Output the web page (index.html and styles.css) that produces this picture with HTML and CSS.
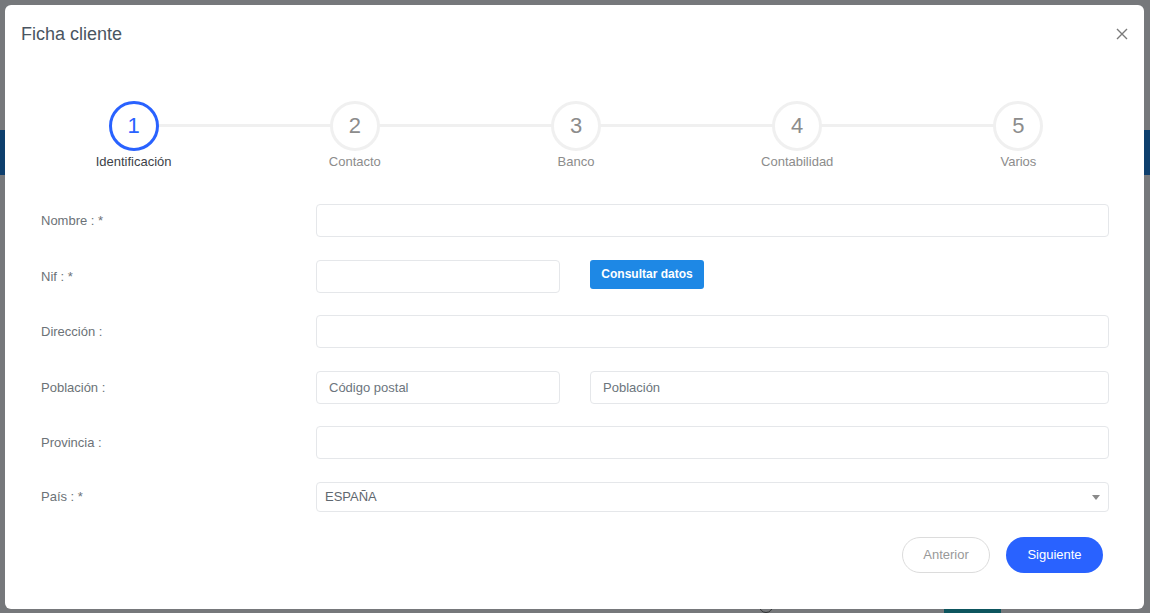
FILE: index.html
```html
<!DOCTYPE html>
<html lang="es">
<head>
    <meta charset="UTF-8">
    <meta name="viewport" content="width=device-width, initial-scale=1.0">
    <title>Ficha cliente</title>
    <link rel="stylesheet" href="styles.css">
</head>
<body>
    <div class="page">
        <div class="page-bar"></div>
        <div class="page-foot">
            <span class="foot-icon"></span>
            <span class="foot-text">g</span>
            <span class="foot-btn"></span>
        </div>
    </div>

    <div class="overlay">
        <div class="modal">
            <div class="modal-header">
                <h3 class="modal-title">Ficha cliente</h3>
                <button class="close" type="button" aria-label="Cerrar">
                    <svg width="12" height="12" viewBox="0 0 12 12">
                        <path d="M1 1 L11 11 M11 1 L1 11" stroke="#7a7a7a" stroke-width="1.4" fill="none"/>
                    </svg>
                </button>
            </div>

            <div class="modal-body">
                <div class="steps">
                    <div class="step active">
                        <div class="step-circle">1</div>
                        <div class="step-label">Identificación</div>
                    </div>
                    <div class="step">
                        <div class="step-circle">2</div>
                        <div class="step-label">Contacto</div>
                    </div>
                    <div class="step">
                        <div class="step-circle">3</div>
                        <div class="step-label">Banco</div>
                    </div>
                    <div class="step">
                        <div class="step-circle">4</div>
                        <div class="step-label">Contabilidad</div>
                    </div>
                    <div class="step">
                        <div class="step-circle">5</div>
                        <div class="step-label">Varios</div>
                    </div>
                </div>

                <form class="form">
                    <div class="row">
                        <label>Nombre : *</label>
                        <input type="text">
                    </div>
                    <div class="row">
                        <label>Nif : *</label>
                        <div class="split">
                            <input type="text">
                            <button class="btn-query" type="button">Consultar datos</button>
                        </div>
                    </div>
                    <div class="row">
                        <label>Dirección :</label>
                        <input type="text">
                    </div>
                    <div class="row">
                        <label>Población :</label>
                        <div class="split">
                            <input type="text" placeholder="Código postal">
                            <input type="text" placeholder="Población">
                        </div>
                    </div>
                    <div class="row">
                        <label>Provincia :</label>
                        <input type="text">
                    </div>
                    <div class="row">
                        <label>País : *</label>
                        <div class="select">
                            <span>ESPAÑA</span>
                            <span class="caret"></span>
                        </div>
                    </div>

                    <div class="actions">
                        <button class="btn btn-prev" type="button">Anterior</button>
                        <button class="btn btn-next" type="button">Siguiente</button>
                    </div>
                </form>
            </div>
        </div>
    </div>
</body>
</html>
```

FILE: styles.css
```css
* {
    box-sizing: border-box;
}

body {
    margin: 0;
    font-family: "Liberation Sans", Arial, sans-serif;
    background: #76787b;
    height: 613px;
    overflow: hidden;
}

/* page behind the overlay (already dimmed) */
.page {
    padding-top: 130px;
}

.page-bar {
    height: 45px;
    background: #0e3f6d;
}

.page-foot {
    display: flex;
    align-items: flex-start;
    margin-top: 423px;
    height: 20px;
}

.foot-icon {
    width: 14px;
    height: 14px;
    margin-left: 759px;
    margin-top: 1px;
    border: 1px solid #2f3133;
    border-radius: 50%;
}

.foot-text {
    margin-left: 38px;
    margin-top: -8px;
    font-size: 13px;
    color: #2f3133;
}

.foot-btn {
    width: 57px;
    height: 20px;
    margin-left: 126px;
    background: #0d555e;
    border-radius: 3px;
}

/* modal */
.overlay {
    position: fixed;
    inset: 0;
}

.modal {
    position: absolute;
    top: 5px;
    left: 5px;
    width: 1139px;
    height: 604px;
    background: #fff;
    border-radius: 6px;
}

.modal-header {
    display: flex;
    justify-content: space-between;
    align-items: center;
    padding: 18px 15px 0 16px;
}

.modal-title {
    margin: 0;
    font-size: 18px;
    line-height: 22px;
    font-weight: normal;
    color: #4a5561;
}

.close {
    border: 0;
    background: none;
    padding: 0;
    width: 14px;
    height: 14px;
    display: flex;
    align-items: center;
    justify-content: center;
    cursor: pointer;
}

.modal-body {
    padding: 0 16px;
}

/* stepper */
.steps {
    display: flex;
    margin: 56px -1px 0 2px;
}

.step {
    flex: 1;
    display: flex;
    flex-direction: column;
    align-items: center;
    position: relative;
}

.step + .step::before {
    content: "";
    position: absolute;
    top: 23px;
    left: -50%;
    right: 50%;
    height: 3px;
    background: #f0f0f0;
}

.step-circle {
    position: relative;
    z-index: 1;
    width: 50px;
    height: 50px;
    border: 3px solid #f0f0f0;
    border-radius: 50%;
    background: #fff;
    display: flex;
    align-items: center;
    justify-content: center;
    font-size: 22px;
    color: #8c8c8c;
}

.step-label {
    margin-top: 3px;
    font-size: 13px;
    line-height: 16px;
    color: #8c8c8c;
}

.step.active .step-circle {
    border-color: #2962ff;
    color: #2962ff;
}

.step.active .step-label {
    color: #3d4248;
}

/* form */
.form {
    margin: 34px 19px 0 20px;
    display: flex;
    flex-direction: column;
    row-gap: 22.5px;
}

.row {
    display: grid;
    grid-template-columns: 275px 1fr;
    align-items: center;
}

.row label {
    font-size: 13px;
    color: #6c7277;
}

input {
    width: 100%;
    height: 33px;
    border: 1px solid #e5e7ea;
    border-radius: 4px;
    padding: 0 12px;
    font-family: inherit;
    font-size: 13px;
    color: #495057;
}

input::placeholder {
    color: #6c757d;
}

.split {
    display: grid;
    grid-template-columns: 244px 1fr;
    column-gap: 30px;
    align-items: start;
}

.btn-query {
    justify-self: start;
    width: 114px;
    height: 29px;
    border: 0;
    border-radius: 3px;
    background: #1e88e5;
    color: #fff;
    font-family: inherit;
    font-size: 12px;
    font-weight: bold;
}

.select {
    height: 30px;
    border: 1px solid #e5e7ea;
    border-radius: 4px;
    display: flex;
    align-items: center;
    justify-content: space-between;
    padding: 0 8px 0 8px;
    font-size: 13px;
    color: #5f6870;
}

.caret {
    width: 0;
    height: 0;
    border-left: 4.5px solid transparent;
    border-right: 4.5px solid transparent;
    border-top: 5px solid #8a8a8a;
    margin-top: 2px;
}

.actions {
    display: flex;
    justify-content: flex-end;
    gap: 16px;
    margin-top: 2.5px;
    padding-right: 6px;
}

.btn {
    height: 36px;
    border-radius: 18px;
    font-family: inherit;
    font-size: 13px;
    cursor: pointer;
}

.btn-prev {
    width: 88px;
    border: 1px solid #dcdcdc;
    background: #fff;
    color: #999;
}

.btn-next {
    width: 97px;
    border: 0;
    background: #2962ff;
    color: #fff;
}
```
